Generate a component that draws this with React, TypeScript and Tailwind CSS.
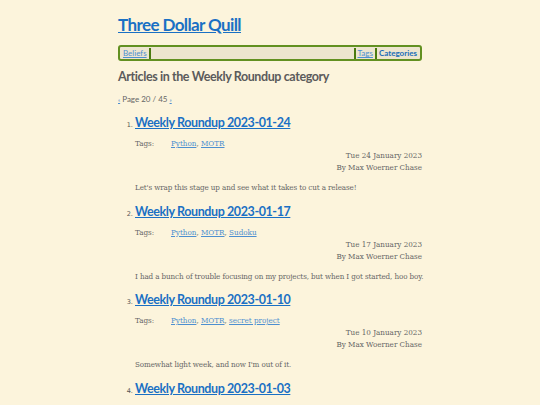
import React from 'react';

interface Article {
  title: string;
  tags: string[];
  date: string;
  summary: string;
}

const articles: Article[] = [
  {
    title: 'Weekly Roundup 2023-01-24',
    tags: ['Python', 'MOTR'],
    date: 'Tue 24 January 2023',
    summary: "Let's wrap this stage up and see what it takes to cut a release!",
  },
  {
    title: 'Weekly Roundup 2023-01-17',
    tags: ['Python', 'MOTR', 'Sudoku'],
    date: 'Tue 17 January 2023',
    summary: 'I had a bunch of trouble focusing on my projects, but when I got started, hoo boy.',
  },
  {
    title: 'Weekly Roundup 2023-01-10',
    tags: ['Python', 'MOTR', 'secret project'],
    date: 'Tue 10 January 2023',
    summary: "Somewhat light week, and now I'm out of it.",
  },
  {
    title: 'Weekly Roundup 2023-01-03',
    tags: ['Python', 'MOTR'],
    date: 'Tue 3 January 2023',
    summary: 'More progress.',
  },
];

const sans = "font-['Lato',sans-serif]";
const serif = "font-['DejaVu_Serif_Condensed','DejaVu_Serif',serif]";

export default function App() {
  return (
    <div className="min-h-screen bg-[#fcf4dc] text-[#555]">
      <div className="mx-auto w-[304px] pt-[14px]">
        <h1 className={`${sans} text-[17px] font-bold leading-[22px] tracking-[-0.6px]`}>
          <a href="#" className="text-[#1a70c4] underline">Three Dollar Quill</a>
        </h1>

        {/* nav bar */}
        <nav className={`${sans} mt-[9px] flex h-[16px] items-center rounded-[3px] border-2 border-[#629021] bg-[#ede5cf] px-[1px] text-[8px] leading-none`}>
          <a href="#" className="px-[2px] text-[#4d8fd0] underline">Beliefs</a>
          <span className="h-[11px] border-l-2 border-[#4a7a10]" />
          <span className="flex-1" />
          <span className="h-[11px] border-l-2 border-[#4a7a10]" />
          <a href="#" className="px-[2px] text-[#4d8fd0] underline">Tags</a>
          <span className="h-[11px] border-l-2 border-[#4a7a10]" />
          <a href="#" className="px-[2px] font-bold text-[#1a6db8]">Categories</a>
        </nav>

        <h2 className={`${sans} mt-[7px] text-[12.5px] font-bold leading-[18px] tracking-[-0.4px] text-[#5b5b5b]`}>
          Articles in the Weekly Roundup category
        </h2>

        <p className={`${sans} mt-[8px] text-[8px] leading-[10px] text-[#666]`}>
          <a href="#" className="text-[5px] text-[#4d8fd0] underline">«</a> Page 20 / 45{' '}
          <a href="#" className="text-[5px] text-[#4d8fd0] underline">»</a>
        </p>

        <ol className="mt-[5px] list-decimal pl-[17px] marker:font-['DejaVu_Sans',sans-serif] marker:text-[6.5px] marker:text-[#555]">
          {articles.map((a) => (
            <li key={a.title} className="h-[88.5px] pt-[4px]">
              <h3 className={`${sans} text-[12.5px] font-bold leading-[18px] tracking-[-0.4px]`}>
                <a href="#" className="text-[#1a70c4] underline">{a.title}</a>
              </h3>
              <div className={`${serif} text-[8px] leading-[12px] text-[#666]`}>
                <div className="mt-[6px] flex">
                  <span className="w-[36px]">Tags:</span>
                  <span>
                    {a.tags.map((t, i) => (
                      <React.Fragment key={t}>
                        {i > 0 && ', '}
                        <a href="#" className="text-[#4d8fd0] underline">{t}</a>
                      </React.Fragment>
                    ))}
                  </span>
                </div>
                <div className="text-right">{a.date}</div>
                <div className="text-right">By Max Woerner Chase</div>
                <p className="mt-[8px] whitespace-nowrap tracking-[-0.12px]">{a.summary}</p>
              </div>
            </li>
          ))}
        </ol>
      </div>
    </div>
  );
}
